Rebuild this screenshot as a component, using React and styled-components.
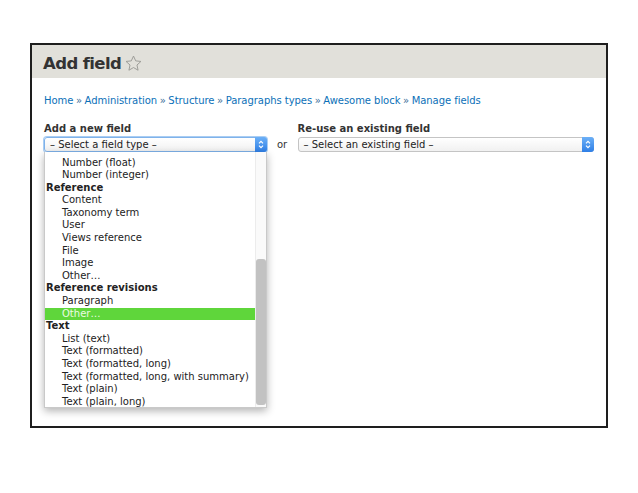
import React from "react";
import styled, { createGlobalStyle } from "styled-components";

const Global = createGlobalStyle`
  html, body { margin: 0; padding: 0; background: #fff; }
  body { font-family: "DejaVu Sans", Verdana, sans-serif; color: #333; }
`;

const Page = styled.div`
  padding: 43px 0 0 30px;
  width: 638px;
  height: 493px;
  box-sizing: border-box;
`;

const Frame = styled.div`
  width: 578px;
  height: 385px;
  box-sizing: border-box;
  border: 2px solid #1e1e1e;
  background: #fff;
  display: flex;
  flex-direction: column;
`;

const Header = styled.div`
  height: 33px;
  box-sizing: border-box;
  background: #e1e0da;
  display: flex;
  align-items: center;
  padding: 4px 0 0 11px;
  gap: 3px;
`;

const Title = styled.h1`
  margin: 0;
  font-family: "DejaVu Sans", Verdana, sans-serif;
  font-size: 16.5px;
  font-weight: bold;
  color: #333;
  letter-spacing: -0.6px;
`;

const Body = styled.div`
  padding: 16px 12px 0 12px;
`;

const Crumbs = styled.div`
  font-size: 10px;
  line-height: 13px;
  color: #0b70b8;
  display: flex;
  gap: 2.6px;
  letter-spacing: -0.05px;
`;

const Sep = styled.span`
  color: #3a6f99;
`;

const Row = styled.div`
  margin-top: 16px;
  display: flex;
  align-items: flex-end;
`;

const Field = styled.div`
  display: flex;
  flex-direction: column;
  width: ${(p) => p.$w}px;
  position: relative;
`;

const Label = styled.label`
  font-size: 10px;
  font-weight: bold;
  line-height: 12px;
  margin-bottom: 2px;
  color: #333;
`;

const Select = styled.div`
  height: 15px;
  box-sizing: border-box;
  border: 1px solid ${(p) => (p.$focus ? "#7fb2ea" : "#c4c4c4")};
  box-shadow: ${(p) => (p.$focus ? "0 0 0 1px #a9cdf3" : "none")};
  border-radius: 3px;
  background: linear-gradient(#ffffff, #f1f1f1);
  display: flex;
  align-items: center;
  font-size: 10px;
  color: #222;
  padding-left: 5px;
`;

const SelectText = styled.span`
  flex: 1;
  line-height: 12px;
`;

const Arrow = styled.span`
  width: 12px;
  height: 15px;
  margin: -1px -1px -1px 0;
  border-radius: 0 3px 3px 0;
  background: linear-gradient(#6cb0f7, #2f7fe6);
  display: flex;
  align-items: center;
  justify-content: center;
`;

const Or = styled.span`
  font-size: 10px;
  width: 31px;
  text-align: center;
  line-height: 15px;
  color: #333;
`;

const Dropdown = styled.div`
  position: absolute;
  top: 29px;
  left: 0;
  width: 223px;
  height: 256px;
  box-sizing: border-box;
  background: #fff;
  border: 1px solid #c9c9c9;
  border-top: none;
  box-shadow: 0 3px 8px rgba(0, 0, 0, 0.3);
  overflow: hidden;
  display: flex;
  z-index: 2;
`;

const List = styled.div`
  flex: 1;
  padding-top: 4.5px;
`;

const Item = styled.div`
  height: 12.6px;
  line-height: 12.6px;
  font-size: 10px;
  white-space: nowrap;
  padding-left: ${(p) => (p.$group ? 1 : 17)}px;
  font-weight: ${(p) => (p.$group ? "bold" : "normal")};
  background: ${(p) => (p.$sel ? "#5fd63b" : "transparent")};
  color: ${(p) => (p.$sel ? "#eafbe2" : "#222")};
`;

const Track = styled.div`
  width: 11px;
  padding-top: 107px;
  padding-bottom: 2px;
  box-sizing: border-box;
  display: flex;
  justify-content: center;
  border-left: 1px solid #ececec;
  background: #fafafa;
`;

const Thumb = styled.div`
  width: 6px;
  flex: 1;
  border-radius: 3px;
  background: #c2c2c2;
`;

const Chevrons = () => (
  <svg width="6" height="9" viewBox="0 0 6 9">
    <path d="M1 3.3 L3 1.3 L5 3.3 M1 5.7 L3 7.7 L5 5.7" fill="none" stroke="#fff" strokeWidth="1.2" />
  </svg>
);

const Star = () => (
  <svg width="19" height="19" viewBox="0 0 24 24">
    <path
      d="M12 2.6 L14.8 8.7 L21.4 9.4 L16.4 13.9 L17.8 20.5 L12 17.1 L6.2 20.5 L7.6 13.9 L2.6 9.4 L9.2 8.7 Z"
      fill="none"
      stroke="#9a9a96"
      strokeWidth="1.2"
      strokeLinejoin="round"
    />
  </svg>
);

const crumbs = ["Home", "Administration", "Structure", "Paragraphs types", "Awesome block", "Manage fields"];

const items = [
  ["Number (float)"],
  ["Number (integer)"],
  ["Reference", "g"],
  ["Content"],
  ["Taxonomy term"],
  ["User"],
  ["Views reference"],
  ["File"],
  ["Image"],
  ["Other…"],
  ["Reference revisions", "g"],
  ["Paragraph"],
  ["Other…", "s"],
  ["Text", "g"],
  ["List (text)"],
  ["Text (formatted)"],
  ["Text (formatted, long)"],
  ["Text (formatted, long, with summary)"],
  ["Text (plain)"],
  ["Text (plain, long)"],
];

export default function App() {
  return (
    <>
      <Global />
      <Page>
        <Frame>
          <Header>
            <Title>Add field</Title>
            <Star />
          </Header>
          <Body>
            <Crumbs>
              {crumbs.map((c, i) => (
                <React.Fragment key={c}>
                  {i > 0 && <Sep>»</Sep>}
                  <span>{c}</span>
                </React.Fragment>
              ))}
            </Crumbs>
            <Row>
              <Field $w={223}>
                <Label>Add a new field</Label>
                <Select $focus>
                  <SelectText>– Select a field type –</SelectText>
                  <Arrow>
                    <Chevrons />
                  </Arrow>
                </Select>
                <Dropdown>
                  <List>
                    {items.map(([t, k], i) => (
                      <Item key={i} $group={k === "g"} $sel={k === "s"}>
                        {t}
                      </Item>
                    ))}
                  </List>
                  <Track>
                    <Thumb />
                  </Track>
                </Dropdown>
              </Field>
              <Or>or</Or>
              <Field $w={297}>
                <Label>Re-use an existing field</Label>
                <Select>
                  <SelectText>– Select an existing field –</SelectText>
                  <Arrow>
                    <Chevrons />
                  </Arrow>
                </Select>
              </Field>
            </Row>
          </Body>
        </Frame>
      </Page>
    </>
  );
}
